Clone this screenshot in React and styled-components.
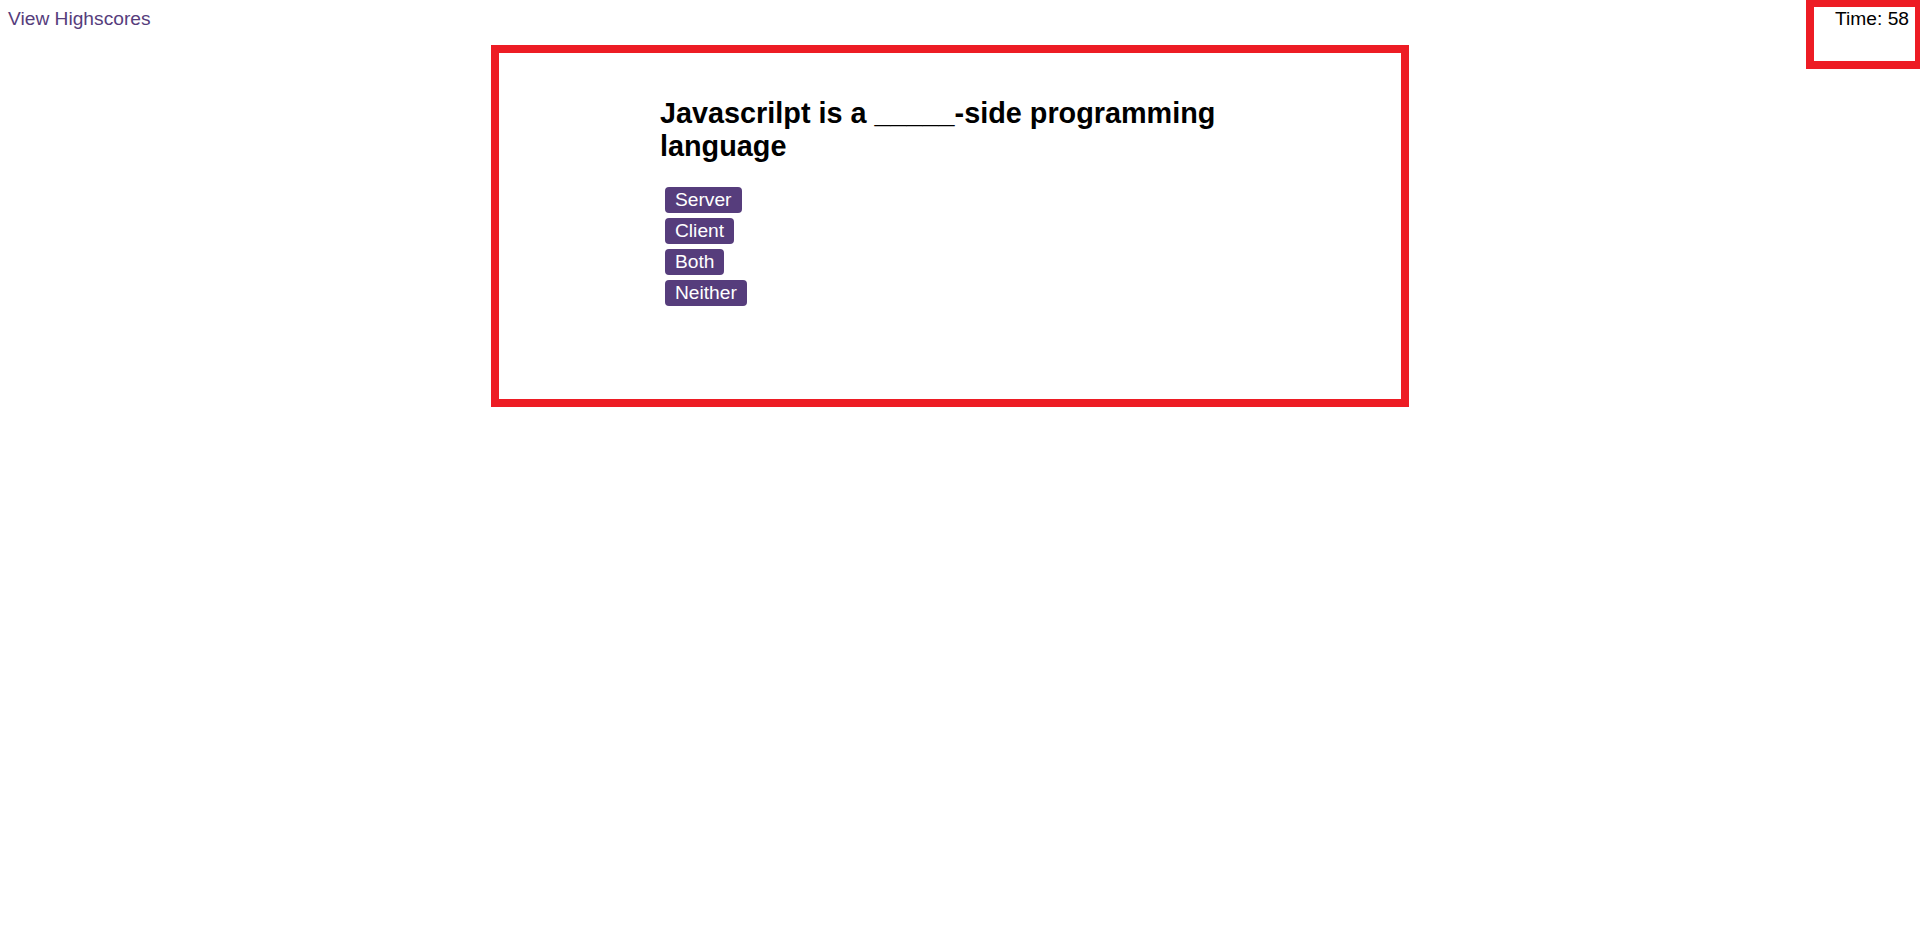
import React from 'react';
import styled, { createGlobalStyle } from 'styled-components';

const GlobalStyle = createGlobalStyle`
  body {
    margin: 0;
    font-family: "Liberation Sans", Arial, sans-serif;
    font-size: 19.2px;
    color: #000;
    background: #fff;
  }
`

const Header = styled.header`
  display: flex;
  justify-content: space-between;
  align-items: flex-start;
  height: 45px;
  line-height: 22px;
`

const HighscoreLink = styled.a`
  padding: 8px 0 0 8px;
  color: #563d7c;
  text-decoration: none;
  cursor: pointer;
`

const Timer = styled.div`
  width: 95px;
  height: 53px;
  padding: 1px 6px 0 0;
  box-sizing: content-box;
  border: 8px solid #ed1c24;
  border-top-width: 7px;
  border-right-width: 5px;
  text-align: right;
`

const Card = styled.main`
  width: 902px;
  height: 326px;
  margin-left: 491px;
  padding-top: 20px;
  border: 8px solid #ed1c24;
`

const Question = styled.section`
  width: 580px;
  margin: 0 auto;

  h2 {
    font-size: 28.8px;
    font-weight: bold;
    line-height: 33px;
    margin: 24px 0;
  }
`

const Choices = styled.div`
  display: flex;
  flex-direction: column;
  align-items: flex-start;
  gap: 5px;
  margin-left: 5px;
`

const Choice = styled.button`
  font-family: inherit;
  font-size: 19.2px;
  line-height: 22px;
  padding: 2px 10px;
  border: none;
  border-radius: 4px;
  background: #563d7c;
  color: #fff;
  cursor: pointer;
`

const choices = ['Server', 'Client', 'Both', 'Neither'];

export default function App() {
  return (
    <>
      <GlobalStyle />
      <Header>
        <HighscoreLink>View Highscores</HighscoreLink>
        <Timer>Time: 58</Timer>
      </Header>
      <Card>
        <Question>
          <h2>Javascrilpt is a _____-side programming language</h2>
          <Choices>
            {choices.map(c => <Choice key={c}>{c}</Choice>)}
          </Choices>
        </Question>
      </Card>
    </>
  );
}
